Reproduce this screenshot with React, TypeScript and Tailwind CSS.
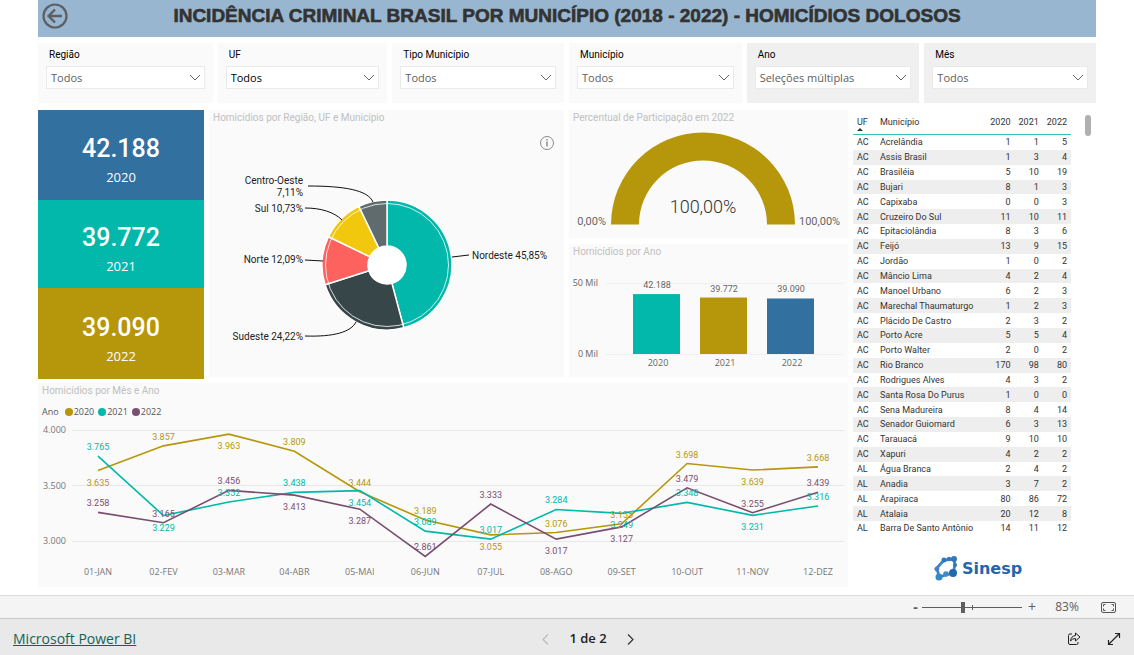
import type { ReactNode } from 'react';

const filters = [
  { id: 'regiao', label: 'Região', value: 'Todos', panel: 'bg-[#fafafa]', text: 'text-[#605e5c]' },
  { id: 'uf', label: 'UF', value: 'Todos', panel: 'bg-[#fafafa]', text: 'text-black' },
  { id: 'tipo', label: 'Tipo Município', value: 'Todos', panel: 'bg-[#fafafa]', text: 'text-[#605e5c]' },
  { id: 'municipio', label: 'Município', value: 'Todos', panel: 'bg-[#fafafa]', text: 'text-[#605e5c]' },
  { id: 'ano', label: 'Ano', value: 'Seleções múltiplas', panel: 'bg-[#f0f0f0]', text: 'text-[#605e5c]' },
  { id: 'mes', label: 'Mês', value: 'Todos', panel: 'bg-[#f0f0f0]', text: 'text-[#605e5c]' },
];

const totals = [
  { year: '2020', value: '42.188', color: 'bg-[#31709f]' },
  { year: '2021', value: '39.772', color: 'bg-[#01b8aa]' },
  { year: '2022', value: '39.090', color: 'bg-[#b6960b]' },
];

const regions = [
  { name: 'Nordeste', share: 45.85, color: '#01b8aa' },
  { name: 'Sudeste', share: 24.22, color: '#374649' },
  { name: 'Norte', share: 12.09, color: '#fd625e' },
  { name: 'Sul', share: 10.73, color: '#f2c80f' },
  { name: 'Centro-Oeste', share: 7.11, color: '#5f6b6d' },
];

const bars = [
  { year: '2020', value: 42188, color: '#01b8aa' },
  { year: '2021', value: 39772, color: '#b6960b' },
  { year: '2022', value: 39090, color: '#31709f' },
];

const months = ['01-JAN', '02-FEV', '03-MAR', '04-ABR', '05-MAI', '06-JUN', '07-JUL', '08-AGO', '09-SET', '10-OUT', '11-NOV', '12-DEZ'];

// labels: u = above the point, d = below it
const series = [
  { year: '2020', color: '#b6960b', values: [3635, 3857, 3963, 3809, 3444, 3189, 3055, 3076, 3155, 3698, 3639, 3668], labels: 'duduuuduuudu' },
  { year: '2021', color: '#01b8aa', values: [3765, 3229, 3352, 3438, 3454, 3089, 3017, 3284, 3249, 3348, 3231, 3316], labels: 'uduuduuududu' },
  { year: '2022', color: '#7a4e70', values: [3258, 3165, 3456, 3413, 3287, 2861, 3333, 3017, 3127, 3479, 3255, 3439], labels: 'uuudduudduuu' },
];

const rows: [string, string, number, number, number][] = [
  ['AC', 'Acrelândia', 1, 1, 5],
  ['AC', 'Assis Brasil', 1, 3, 4],
  ['AC', 'Brasiléia', 5, 10, 19],
  ['AC', 'Bujari', 8, 1, 3],
  ['AC', 'Capixaba', 0, 0, 3],
  ['AC', 'Cruzeiro Do Sul', 11, 10, 11],
  ['AC', 'Epitaciolândia', 8, 3, 6],
  ['AC', 'Feijó', 13, 9, 15],
  ['AC', 'Jordão', 1, 0, 2],
  ['AC', 'Mâncio Lima', 4, 2, 4],
  ['AC', 'Manoel Urbano', 6, 2, 3],
  ['AC', 'Marechal Thaumaturgo', 1, 2, 3],
  ['AC', 'Plácido De Castro', 2, 3, 2],
  ['AC', 'Porto Acre', 5, 5, 4],
  ['AC', 'Porto Walter', 2, 0, 2],
  ['AC', 'Rio Branco', 170, 98, 80],
  ['AC', 'Rodrigues Alves', 4, 3, 2],
  ['AC', 'Santa Rosa Do Purus', 1, 0, 0],
  ['AC', 'Sena Madureira', 8, 4, 14],
  ['AC', 'Senador Guiomard', 6, 3, 13],
  ['AC', 'Tarauacá', 9, 10, 10],
  ['AC', 'Xapuri', 4, 2, 2],
  ['AL', 'Água Branca', 2, 4, 2],
  ['AL', 'Anadia', 3, 7, 2],
  ['AL', 'Arapiraca', 80, 86, 72],
  ['AL', 'Atalaia', 20, 12, 8],
  ['AL', 'Barra De Santo Antônio', 14, 11, 12],
];

const formatNumber = (n: number) => String(n).replace(/(\d)(\d{3})$/, '$1.$2');

function polar(cx: number, cy: number, r: number, share: number) {
  const a = (share / 100) * Math.PI * 2;
  return `${cx + r * Math.sin(a)} ${cy - r * Math.cos(a)}`;
}

function Panel({ title, className = '', children }: { title: string; className?: string; children: ReactNode }) {
  return (
    <section className={`bg-[#fafafa] ${className}`}>
      <h2 className="h-4 px-1 font-['Roboto'] text-[10px] leading-4 text-[#c0c0c0]">{title}</h2>
      {children}
    </section>
  );
}

function Filter({ id, label, value, panel, text }: (typeof filters)[number]) {
  return (
    <div className={`h-[60px] px-2 pt-1 ${panel}`}>
      <label htmlFor={id} className="block h-[19px] px-[3px] font-['Roboto'] text-[10px] leading-4 text-black">{label}</label>
      <div className="relative">
        <select id={id} className={`block h-[23px] w-full appearance-none border border-[#eaeaea] bg-white px-1 pt-px text-[11px] ${text}`}>
          <option>{value}</option>
        </select>
        <svg className="pointer-events-none absolute top-2 right-1 h-[7px] w-[12px]" viewBox="0 0 12 7" fill="none" stroke="#666">
          <path d="M1 1l5 5 5-5" />
        </svg>
      </div>
    </div>
  );
}

function RegionPie() {
  const cx = 178;
  const cy = 155;
  let start = 0;
  return (
    <svg viewBox="0 16 355 251" className="w-full font-['Roboto'] text-[10px]">
      {regions.map((r) => {
        const end = start + r.share;
        const d = `M${polar(cx, cy, 65, start)} A65 65 0 0 1 ${polar(cx, cy, 65, end)} L${polar(cx, cy, 19, end)} A19 19 0 0 0 ${polar(cx, cy, 19, start)} Z`;
        start = end;
        return <path key={r.name} d={d} fill={r.color} stroke="#fff" strokeWidth="1.5" />;
      })}
      <circle cx={cx} cy={cy} r="61.5" fill="none" stroke="#fff" strokeWidth="0.8" />
      <circle cx={cx} cy={cy} r="19" fill="#fff" />
      <g fill="none" stroke="#111">
        <path d="M99 76C135 76 159 80 164 92" />
        <path d="M96 98C112 98 125 102 133 110" />
        <path d="M96 150L114 151" />
        <path d="M96 226C125 227 142 222 147 212" />
        <path d="M243 147L260 145" />
      </g>
      <g fill="#222" textAnchor="end">
        <text x="94" y="74">Centro-Oeste</text>
        <text x="94" y="86">7,11%</text>
        <text x="94" y="102">Sul 10,73%</text>
        <text x="94" y="153">Norte 12,09%</text>
        <text x="94" y="230">Sudeste 24,22%</text>
        <text x="263" y="149" textAnchor="start">Nordeste 45,85%</text>
      </g>
      <g fill="none" stroke="#8a8a8a">
        <circle cx="338" cy="33" r="6.5" />
        <path d="M338 31.500v5M338 29v1.500" stroke="#555" />
      </g>
    </svg>
  );
}

function Gauge() {
  return (
    <svg viewBox="0 16 279 112" className="w-full font-['Roboto'] text-[11px]" fill="#666">
      <path d="M42 114.500A92 92 0 0 1 226 114.500H198A64 64 0 0 0 70 114.500Z" fill="#b6960b" />
      <text x="134" y="103" textAnchor="middle" fill="#333" className="text-[18px] font-light">100,00%</text>
      <text x="37" y="115" textAnchor="end">0,00%</text>
      <text x="230" y="115">100,00%</text>
    </svg>
  );
}

function YearBars() {
  const base = 110;
  return (
    <svg viewBox="0 16 279 117" className="w-full text-[9px]" fill="#666">
      <path d="M37 39.500H274M37 110.500H274" stroke="#f0f0f0" />
      <text x="29" y="42" textAnchor="end">50 Mil</text>
      <text x="29" y="113" textAnchor="end">0 Mil</text>
      {bars.map((b, i) => {
        const h = (b.value / 50000) * 71;
        const x = 64 + i * 67;
        return (
          <g key={b.year} textAnchor="middle">
            <rect x={x} y={base - h} width="47" height={h} fill={b.color} />
            <text x={x + 24} y={base - h - 6} className="font-['Roboto']">{formatNumber(b.value)}</text>
            <text x={x + 25} y="122">{b.year}</text>
          </g>
        );
      })}
    </svg>
  );
}

function MonthLines() {
  const px = (i: number) => 60 + (i * 720) / 11;
  const py = (v: number) => 158 - (v - 3000) * 0.111;
  return (
    <svg viewBox="0 38 810 166" className="w-full text-[9px]">
      <path d="M34 47.500H806M34 102.500H806M34 158.500H806" stroke="#e9e9e9" />
      <g fill="#777">
        <text x="5" y="50">4.000</text>
        <text x="5" y="106">3.500</text>
        <text x="5" y="161">3.000</text>
        {months.map((m, i) => (
          <text key={m} x={px(i)} y="192" textAnchor="middle">{m}</text>
        ))}
      </g>
      {series.map((s) => (
        <polyline key={s.year} points={s.values.map((v, i) => `${px(i)},${py(v)}`).join(' ')} fill="none" stroke={s.color} strokeWidth="1.6" />
      ))}
      {series.map((s) => (
        <g key={s.year} fill={s.color} textAnchor="middle" className="font-['Roboto']">
          {s.values.map((v, i) => (
            <text key={months[i]} x={px(i)} y={py(v) + (s.labels[i] === 'u' ? -6 : 15)}>{formatNumber(v)}</text>
          ))}
        </g>
      ))}
    </svg>
  );
}

function CityTable() {
  return (
    <table className="h-[426px] flex-1 table-fixed border-separate border-spacing-0 font-['Roboto'] text-[9px] leading-[12px] text-[#333]">
      <colgroup>
        <col className="w-[23px]" />
        <col />
        <col className="w-[28px]" />
        <col className="w-[28px]" />
        <col className="w-[28px]" />
      </colgroup>
      <thead>
        <tr className="h-[25px] align-top">
          <th className="border-b border-[#2cc5b9] px-1 pt-[6px] text-left font-normal">
            UF
            <svg viewBox="0 0 6 3" className="h-[3px] w-[6px]" fill="#333"><path d="M0 3L3 0L6 3Z" /></svg>
          </th>
          <th className="border-b border-[#2cc5b9] px-1 pt-[6px] text-left font-normal">Município</th>
          <th className="border-b border-[#2cc5b9] px-1 pt-[6px] text-right font-normal">2020</th>
          <th className="border-b border-[#2cc5b9] px-1 pt-[6px] text-right font-normal">2021</th>
          <th className="border-b border-[#2cc5b9] px-1 pt-[6px] text-right font-normal">2022</th>
        </tr>
      </thead>
      <tbody>
        {rows.map(([uf, city, a, b, c]) => (
          <tr key={city} className="even:bg-[#eeeeee]">
            <td className="px-1 py-0">{uf}</td>
            <td className="truncate px-1 py-0">{city}</td>
            <td className="px-1 py-0 text-right">{a}</td>
            <td className="px-1 py-0 text-right">{b}</td>
            <td className="px-1 py-0 text-right">{c}</td>
          </tr>
        ))}
      </tbody>
    </table>
  );
}

function SinespLogo() {
  return (
    <div className="flex items-center justify-center gap-1">
      <svg viewBox="0 0 24 25" className="h-[25px] w-[24px]" fill="#2f78bd">
        <path d="M2 13L10 4L20 3L21 9L19 17L12 19L5 21L4 16Z" fill="none" stroke="#3b84c6" strokeWidth="2.800" />
        <circle cx="10" cy="4" r="2.500" />
        <circle cx="15" cy="3" r="2.200" />
        <circle cx="20" cy="3" r="3" />
        <circle cx="21" cy="9" r="2" />
        <circle cx="3" cy="13" r="2.400" fill="#4d7fc4" />
        <circle cx="5" cy="21" r="3.500" fill="#2e8ac9" />
        <circle cx="12" cy="18" r="2.800" fill="#3f8ccb" />
        <circle cx="19" cy="17" r="4" fill="#1f69b0" />
      </svg>
      <span className="font-['DejaVu_Sans'] text-base leading-5 font-bold text-[#2465ad]">Sinesp</span>
    </div>
  );
}

export default function App() {
  return (
    <div className="flex min-h-screen flex-col bg-white font-['Open_Sans',sans-serif]">
      <main className="flex-1 px-[38px] pb-2">
        <header className="grid h-[37px] grid-cols-[32px_1fr_32px] items-center bg-[#98b6cf] pb-[5px]">
          <button type="button" aria-label="Voltar" className="pl-1">
            <svg viewBox="0 0 26 26" className="h-[26px] w-[26px]" fill="none" stroke="#5c5f63">
              <circle cx="13" cy="13" r="11.500" strokeWidth="2.200" />
              <path d="M20 13H7M13 6.500L6.500 13L13 19.500" strokeWidth="2.400" />
            </svg>
          </button>
          <h1 className="text-center font-['Liberation_Sans'] text-[19px] leading-6 font-bold text-[#333] [-webkit-text-stroke:0.6px_#333]">
            INCIDÊNCIA CRIMINAL BRASIL POR MUNICÍPIO (2018 - 2022) - HOMICÍDIOS DOLOSOS
          </h1>
        </header>

        <div className="mt-[6px] grid grid-cols-[175fr_170fr_172fr_173fr_173fr_172fr] gap-[5px]">
          {filters.map((f) => (
            <Filter key={f.id} {...f} />
          ))}
        </div>

        <div className="mt-[7px] grid grid-cols-[810fr_243fr] items-start gap-[5px]">
          <div>
            <div className="grid grid-cols-[166fr_355fr_279fr] items-start gap-[5px]">
              <div className="grid grid-rows-[90px_88px_91px]">
                {totals.map((t) => (
                  <div key={t.year} className={`flex flex-col items-center justify-center gap-0.5 pt-2.5 text-white ${t.color}`}>
                    <span className="font-['Roboto'] text-[25px] leading-8 font-medium">{t.value}</span>
                    <span className="text-[13px] leading-5">{t.year}</span>
                  </div>
                ))}
              </div>
              <Panel title="Homicídios por Região, UF e Município">
                <RegionPie />
              </Panel>
              <div className="space-y-[6px]">
                <Panel title="Percentual de Participação em 2022">
                  <Gauge />
                </Panel>
                <Panel title="Homicídios por Ano">
                  <YearBars />
                </Panel>
              </div>
            </div>

            <Panel title="Homicídios por Mês e Ano" className="mt-1">
              <div className="flex h-[22px] items-center gap-1 px-1 pt-1 text-[9px] leading-3 text-[#555]">
                <span className="mr-0.5">Ano</span>
                {series.map((s) => (
                  <span key={s.year} className="flex items-center">
                    <svg viewBox="0 0 8 8" className="mr-px h-[8px] w-[8px]"><circle cx="4" cy="4" r="4" fill={s.color} /></svg>
                    {s.year}
                  </span>
                ))}
              </div>
              <MonthLines />
            </Panel>
          </div>

          <div>
            <div className="flex items-start">
              <CityTable />
              <div className="flex w-[25px] justify-center pt-[5px] pl-[9px]">
                <div className="h-[21px] w-[6px] rounded-full bg-[#b0b0b0]" />
              </div>
            </div>
            <div className="mt-5 pr-[1px] pl-[8px]">
              <SinespLogo />
            </div>
          </div>
        </div>
      </main>

      <div className="flex h-[23px] items-center justify-end border-t border-[#dcdcdc] bg-[#f4f4f4] pr-[18px] text-[#605e5c]">
        <button type="button" aria-label="Reduzir" className="w-[13px] text-center text-sm leading-4 font-bold">-</button>
        <div className="relative flex w-[100px] items-center">
          <input
            type="range"
            aria-label="Zoom"
            min="0"
            max="100"
            defaultValue="41"
            className="h-[11px] w-full appearance-none bg-[linear-gradient(#605e5c,#605e5c)] bg-[length:100%_1px] bg-center bg-no-repeat [&::-webkit-slider-thumb]:h-[11px] [&::-webkit-slider-thumb]:w-[4px] [&::-webkit-slider-thumb]:appearance-none [&::-webkit-slider-thumb]:bg-[#605e5c]"
          />
          <span className="absolute left-1/2 h-[5px] w-px bg-[#605e5c]" />
        </div>
        <button type="button" aria-label="Ampliar" className="w-[20px] text-center text-sm leading-4">+</button>
        <span className="w-[50px] text-center text-xs">83%</span>
        <button type="button" aria-label="Ajustar à página" className="ml-[9px]">
          <svg viewBox="0 0 15 11" className="h-[11px] w-[15px]" fill="none" stroke="#555">
            <rect x="0.500" y="0.500" width="14" height="10" rx="1.500" />
            <path d="M2.500 4.500V2.500H4.500M10.500 2.500H12.500V4.500M12.500 6.500V8.500H10.500M4.500 8.500H2.500V6.500" />
          </svg>
        </button>
      </div>

      <footer className="grid h-[37px] grid-cols-[1fr_auto_1fr] items-center border-t border-[#c8c8c8] bg-[#e9e9e9] px-[13px] pt-1">
        <a href="#" className="justify-self-start text-sm text-[#0f6458] underline">Microsoft Power BI</a>
        <nav className="flex items-center gap-5 pl-[42px]">
          <button type="button" aria-label="Página anterior" disabled>
            <svg viewBox="0 0 7 11" className="h-[11px] w-[7px]" fill="none" stroke="#bbb" strokeWidth="1.200"><path d="M6 0.500L1 5.500L6 10.500" /></svg>
          </button>
          <span className="text-[13px] font-semibold text-[#222]">1 de 2</span>
          <button type="button" aria-label="Próxima página">
            <svg viewBox="0 0 7 11" className="h-[11px] w-[7px]" fill="none" stroke="#333" strokeWidth="1.200"><path d="M1 0.500L6 5.500L1 10.500" /></svg>
          </button>
        </nav>
        <div className="flex gap-[26px] justify-self-end">
          <button type="button" aria-label="Compartilhar">
            <svg viewBox="0 0 14 14" className="h-[14px] w-[14px]" fill="none" stroke="#222" strokeLinejoin="round">
              <path d="M5 2H3Q1.500 2 1.500 3.500V11Q1.500 12.500 3 12.500H9.500Q11 12.500 11 11V10" />
              <path d="M8.500 1L13 5L8.500 9V6.500Q5 6.500 3.500 9Q4 4 8.500 3.500Z" />
            </svg>
          </button>
          <button type="button" aria-label="Tela inteira">
            <svg viewBox="0 0 14 14" className="h-[14px] w-[14px]" fill="none" stroke="#222" strokeWidth="1.200">
              <path d="M1.500 12.500L12.500 1.500M8 1.500H12.500V6M1.500 8V12.500H6" />
            </svg>
          </button>
        </div>
      </footer>
    </div>
  );
}
